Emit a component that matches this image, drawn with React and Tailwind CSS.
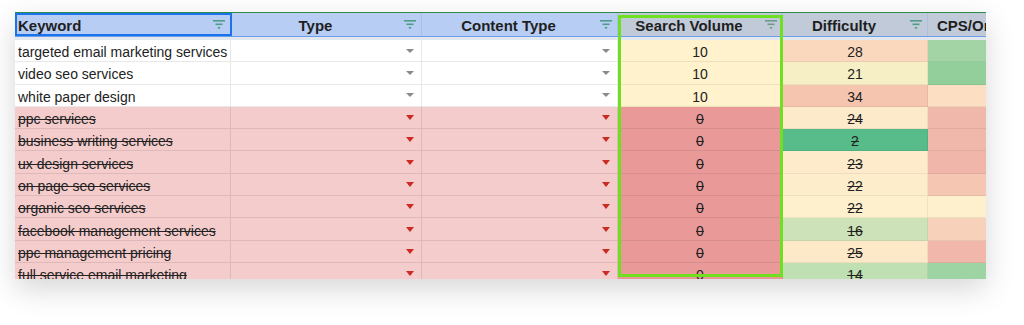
import React from "react";

const rows = [
  { kw: "targeted email marketing services", sv: 10, diff: 28, diffBg: "bg-[#fad8bd]", cps: "bg-[#a2d4a6]", done: false },
  { kw: "video seo services", sv: 10, diff: 21, diffBg: "bg-[#f6efc6]", cps: "bg-[#92cf9b]", done: false },
  { kw: "white paper design", sv: 10, diff: 34, diffBg: "bg-[#f5c5b0]", cps: "bg-[#fcdfc3]", done: false },
  { kw: "ppc services", sv: 0, diff: 24, diffBg: "bg-[#fdeacb]", cps: "bg-[#f0b8ab]", done: true },
  { kw: "business writing services", sv: 0, diff: 2, diffBg: "bg-[#57bb8a]", cps: "bg-[#f0b8ab]", done: true },
  { kw: "ux design services", sv: 0, diff: 23, diffBg: "bg-[#fdebcb]", cps: "bg-[#f0b6aa]", done: true },
  { kw: "on page seo services", sv: 0, diff: 22, diffBg: "bg-[#fdedcb]", cps: "bg-[#f5c7b3]", done: true },
  { kw: "organic seo services", sv: 0, diff: 22, diffBg: "bg-[#fff0cd]", cps: "bg-[#fef0cd]", done: true },
  { kw: "facebook management services", sv: 0, diff: 16, diffBg: "bg-[#cde2b9]", cps: "bg-[#f8d1ba]", done: true },
  { kw: "ppc management pricing", sv: 0, diff: 25, diffBg: "bg-[#fde8c8]", cps: "bg-[#f0b7aa]", done: true },
  { kw: "full service email marketing", sv: 0, diff: 14, diffBg: "bg-[#bfe0b3]", cps: "bg-[#9ed3a3]", done: true },
];

function FilterIcon({ gray }) {
  return (
    <svg width="12" height="9" viewBox="0 0 12 9" className="shrink-0">
      <g fill={gray ? "#6f9a8c" : "#4f9d87"}>
        <rect x="0" y="0" width="12" height="1.6" />
        <rect x="2.5" y="3.5" width="7" height="1.6" />
        <rect x="4.8" y="7" width="2.4" height="1.6" />
      </g>
    </svg>
  );
}

function Arrow({ red }) {
  return red ? (
    <div className="w-0 h-0 border-l-[4px] border-r-[4px] border-t-[5px] border-l-transparent border-r-transparent border-t-[#cc2a24]" />
  ) : (
    <div className="w-0 h-0 border-l-[4px] border-r-[4px] border-t-[4px] border-l-transparent border-r-transparent border-t-[#8a8a8a]" />
  );
}

function HeaderCell({ label, w, bg, gray }) {
  return (
    <div className={`${w} ${bg} shrink-0 h-full flex items-center border-r border-[#a9c0e6]`}>
      <div className="flex-1 text-center whitespace-nowrap pt-[3px]">{label}</div>
      <div className="w-[22px] flex justify-center">
        <FilterIcon gray={gray} />
      </div>
    </div>
  );
}

export default function App() {
  return (
    <div
      className="w-[1024px] h-[325px] bg-white pt-[12px] pl-[15px] overflow-hidden"
      style={{ fontFamily: '"Liberation Sans", Arial, sans-serif' }}
    >
      <div className="relative w-[971px] h-[267px] overflow-hidden bg-white shadow-[0_10px_28px_rgba(0,0,0,0.16)]">
        {/* Header */}
        <div className="flex h-[25px] border-t border-[#2e8b47] text-[15px] font-bold text-[#1f1f1f] border-b border-b-[#6d9eeb]">
          <div className="w-[217px] shrink-0 h-full bg-[#b7cdf4] border-2 border-[#1a73e8] flex items-center pl-[1px] pr-[5px]">
            <span className="flex-1 pt-[3px]">Keyword</span>
            <FilterIcon />
          </div>
          <HeaderCell label="Type" w="w-[190px]" bg="bg-[#b7cdf4]" />
          <HeaderCell label="Content Type" w="w-[196px]" bg="bg-[#b7cdf4]" />
          <HeaderCell label="Search Volume" w="w-[165px]" bg="bg-[#c0cad8]" gray />
          <HeaderCell label="Difficulty" w="w-[145px]" bg="bg-[#c0cad8]" />
          <div className="w-[120px] shrink-0 h-full bg-[#c0cad8] flex items-center pl-[9px] pt-[3px] whitespace-nowrap">
            CPS/Organic
          </div>
        </div>
        <div className="h-[3px] bg-[#e3e8ee]" />

        {/* Rows */}
        <div className="text-[14px] text-[#222]">
          {rows.map((r) => (
            <div
              key={r.kw}
              className={`flex h-[22.3px] ${r.done ? "bg-[#f4cccc] line-through" : "bg-white"}`}
            >
              <div className="w-[216px] shrink-0 flex items-center pl-[3px] pt-[4px] whitespace-nowrap overflow-hidden border-r border-b border-black/[0.09]">
                {r.kw}
              </div>
              <div className="w-[191px] shrink-0 flex items-center justify-end pr-[7px] border-r border-b border-black/[0.09]">
                <Arrow red={r.done} />
              </div>
              <div className="w-[196px] shrink-0 flex items-center justify-end pr-[7px] border-r border-b border-black/[0.09]">
                <Arrow red={r.done} />
              </div>
              <div
                className={`w-[165px] shrink-0 flex items-center justify-center pt-[4px] border-r border-b border-black/[0.07] ${
                  r.done ? "bg-[#ea9999]" : "bg-[#fff2cc]"
                }`}
              >
                {r.sv}
              </div>
              <div className={`w-[145px] shrink-0 flex items-center justify-center pt-[4px] border-r border-b border-black/[0.06] ${r.diffBg}`}>
                {r.diff}
              </div>
              <div className={`w-[120px] shrink-0 border-b border-black/[0.06] ${r.cps}`} />
            </div>
          ))}
        </div>

        {/* highlighted column outline */}
        <div className="absolute left-[603px] top-[3px] w-[165px] h-[262px] border-[3px] border-[#6ee01f] pointer-events-none" />
      </div>
    </div>
  );
}
